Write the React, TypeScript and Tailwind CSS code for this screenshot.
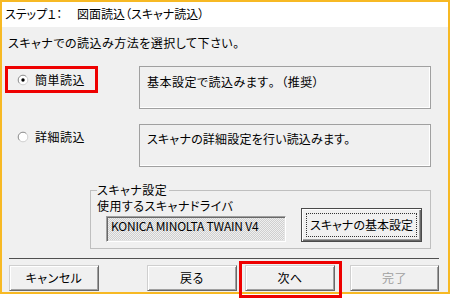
import React from "react";

function Radio({ checked }: { checked?: boolean }) {
  return (
    <svg width="12" height="12" viewBox="0 0 12 12" className="shrink-0">
      <circle cx="6" cy="6" r="4.8" fill="#fff" />
      <path d="M2.6 9.4 A4.8 4.8 0 0 1 9.4 2.6" stroke="#8a8a8a" strokeWidth="1" fill="none" />
      <path d="M9.4 2.6 A4.8 4.8 0 0 1 2.6 9.4" stroke="#d0d0d0" strokeWidth="1" fill="none" />
      {checked && <circle cx="6" cy="6" r="1.7" fill="#000" />}
    </svg>
  );
}

function Btn({ children, w, disabled, className = "" }: { children: React.ReactNode; w: string; disabled?: boolean; className?: string }) {
  return (
    <div
      className={`${w} h-[26px] flex items-center justify-center bg-[#f0f0f0] border border-t-[#cfcfcf] border-l-[#cfcfcf] border-r-[#696969] border-b-[#696969] shadow-[inset_1px_1px_0_#fff,inset_-1px_-1px_0_#a0a0a0] ${disabled ? "text-[#a0a0a0]" : "text-black"} ${className}`}
    >
      {children}
    </div>
  );
}

export default function App() {
  return (
    <div className="relative w-[450px] h-[298px] bg-white text-black text-[12px] leading-[16px] tracking-[0.5px] font-['Noto_Sans_CJK_JP','Noto_Sans',sans-serif] [font-feature-settings:'palt']">
      <div className="w-[450px] h-[294px] border-2 border-[#f7b924] flex flex-col">
        <div className="h-[25px] bg-white pt-[4px] pl-[3px] flex tracking-normal">
          <span className="w-[72px]">ステップ１：</span>
          <span>図面読込（スキャナ読込）</span>
        </div>
        <div className="flex-1 bg-[#f0f0f0] flex flex-col">
          <div className="pt-[8px] pl-[6px]">スキャナでの読込み方法を選択して下さい。</div>

          <div className="mt-[15px] flex items-start">
            <div className="w-[137px] pl-[15px] pt-[6px] flex items-center gap-[6px]">
              <Radio checked />
              <span>簡単読込</span>
            </div>
            <div className="w-[292px] h-[43px] border border-[#a0a0a0] shadow-[inset_-1px_-1px_0_#fff] pl-[7px] pt-[7px]">
              基本設定で読込みます<span className="[font-feature-settings:normal]">。</span>（推奨）
            </div>
          </div>

          <div className="mt-[15px] flex items-start">
            <div className="w-[137px] pl-[15px] pt-[5px] flex items-center gap-[6px]">
              <Radio />
              <span>詳細読込</span>
            </div>
            <div className="w-[292px] h-[43px] border border-[#a0a0a0] shadow-[inset_-1px_-1px_0_#fff] pl-[7px] pt-[6px] tracking-[0.2px]">
              スキャナの詳細設定を行い読込みます。
            </div>
          </div>

          <fieldset className="mt-[15px] ml-[88px] w-[341px] border border-[#bfbfbf] pl-[6px] pr-[8px] pb-[6px] pt-0 m-0">
            <legend className="pr-[2px]">スキャナ設定</legend>
            <div className="flex items-end">
              <div className="flex flex-col">
                <div>使用するスキャナドライバ</div>
                <div className="mt-[2px] ml-[9px] w-[180px] h-[26px] border border-t-[#a0a0a0] border-l-[#a0a0a0] border-r-white border-b-white shadow-[inset_1px_1px_0_#696969,inset_-1px_-1px_0_#e3e3e3] bg-[repeating-conic-gradient(#cfcfcf_0%_25%,#efefef_0%_50%)] bg-[length:2px_2px] pl-[4px] pt-[2px] leading-[14px] tracking-[-0.2px] [font-feature-settings:normal]">
                  KONICA MINOLTA TWAIN V4
                </div>
              </div>
              <div className="relative ml-[15px] w-[121px] h-[34px] flex items-center justify-center bg-[#f0f0f0] border border-[#4a4a4a] shadow-[inset_1px_1px_0_#fff,inset_-1px_-1px_0_#696969,inset_-2px_-2px_0_#a0a0a0] tracking-normal">
                <span className="absolute inset-[4px] border border-dotted border-[#333]" />
                <span>スキャナの基本設定</span>
              </div>
            </div>
          </fieldset>

          <div className="mt-[9px] ml-[7px] w-[430px] h-px bg-[#505050]" />

          <div className="mt-[6px] ml-[7px] flex">
            <Btn w="w-[90px]">キャンセル</Btn>
            <Btn w="w-[90px]" className="ml-[48px]">戻る</Btn>
            <Btn w="w-[90px]" className="ml-[8px]">次へ</Btn>
            <Btn w="w-[89px]" className="ml-[15px]" disabled>完了</Btn>
          </div>
        </div>
      </div>

      <div className="absolute left-[5px] top-[66px] w-[93px] h-[27px] border-[3px] border-[#ee0000]" />
      <div className="absolute left-[239px] top-[261px] w-[103px] h-[37px] border-[3px] border-[#ee0000]" />
    </div>
  );
}
